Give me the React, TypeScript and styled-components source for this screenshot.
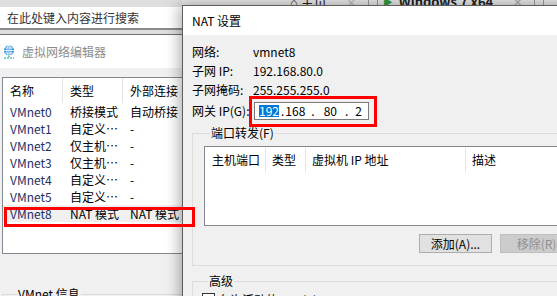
import React from "react";
import styled, { createGlobalStyle } from "styled-components";

const GlobalStyle = createGlobalStyle`
  *, *::before, *::after { box-sizing: border-box; }
  html, body { margin: 0; padding: 0; }
  body {
    font-family: "Noto Sans CJK SC", "Noto Sans", sans-serif;
    font-size: 12px;
    color: #000;
    background: #e5e5e5;
  }
`;

const networks = [
  { name: "VMnet0", type: "桥接模式", ext: "自动桥接" },
  { name: "VMnet1", type: "自定义…", ext: "-" },
  { name: "VMnet2", type: "仅主机…", ext: "-" },
  { name: "VMnet3", type: "仅主机…", ext: "-" },
  { name: "VMnet4", type: "自定义…", ext: "-" },
  { name: "VMnet5", type: "自定义…", ext: "-" },
  { name: "VMnet8", type: "NAT 模式", ext: "NAT 模式", selected: true },
];

const ipParts = [
  { text: "192", gap: 4, selected: true },
  { text: ".", gap: 2 },
  { text: "168", gap: 1 },
  { text: ".", gap: 6 },
  { text: "80", gap: 9 },
  { text: ".", gap: 8 },
  { text: "2", gap: 7 },
];

export default function App() {
  return (
    <>
      <GlobalStyle />
      <Desktop>
        <LeftColumn>
          <SearchBox>在此处键入内容进行搜索</SearchBox>
          <EditorWindow>
            <WindowTitle $inactive>
              <GlobeIcon />
              <span>虚拟网络编辑器</span>
            </WindowTitle>
            <EditorBody>
              <NetList>
                <NetRow $header>
                  <NetCell $sep>名称</NetCell>
                  <NetCell $sep>类型</NetCell>
                  <NetCell>外部连接</NetCell>
                </NetRow>
                {networks.map((n) => (
                  <NetRow key={n.name} $selected={n.selected}>
                    <NetCell $name>{n.name}</NetCell>
                    <NetCell>{n.type}</NetCell>
                    <NetCell>{n.ext}</NetCell>
                  </NetRow>
                ))}
              </NetList>
              <GroupBox $top={33} $pad="4px 8px">
                <GroupLegend>VMnet 信息</GroupLegend>
              </GroupBox>
            </EditorBody>
          </EditorWindow>
        </LeftColumn>

        <RightColumn>
          <TabStrip>
            <Tab>
              <span>⌂ 主页</span>
              <TabClose>×</TabClose>
            </Tab>
            <TabDivider />
            <Tab $active>
              <VmMark>▶</VmMark>
              <span>Windows 7 x64</span>
              <TabClose>×</TabClose>
            </Tab>
            <TabDivider />
          </TabStrip>

          <Dialog>
            <DialogTitle>NAT 设置</DialogTitle>
            <DialogBody>
              <InfoRow>
                <span>网络:</span>
                <span>vmnet8</span>
              </InfoRow>
              <InfoRow>
                <span>子网 IP:</span>
                <span>192.168.80.0</span>
              </InfoRow>
              <InfoRow>
                <span>子网掩码:</span>
                <span>255.255.255.0</span>
              </InfoRow>
              <InfoRow $tall>
                <span>网关 IP(G):</span>
                <IpInput>
                  {ipParts.map((p, i) => (
                    <IpPart key={i} $gap={p.gap} $selected={p.selected}>
                      {p.text}
                    </IpPart>
                  ))}
                </IpInput>
              </InfoRow>

              <GroupBox $top={3} $pad="6px 11px 12px 11px">
                <GroupLegend>端口转发(F)</GroupLegend>
                <PortList>
                  <PortHeader>
                    <PortCell>主机端口</PortCell>
                    <PortCell>类型</PortCell>
                    <PortCell>虚拟机 IP 地址</PortCell>
                    <PortCell>描述</PortCell>
                  </PortHeader>
                </PortList>
                <ButtonRow>
                  <Button>添加(A)...</Button>
                  <Button disabled>移除(R)</Button>
                </ButtonRow>
              </GroupBox>

              <GroupBox $top={8} $pad="5px 9px">
                <GroupLegend>高级</GroupLegend>
                <CheckRow>
                  <CheckBox />
                  <span>允许活动的 FTP(T)</span>
                </CheckRow>
              </GroupBox>
            </DialogBody>
          </Dialog>
        </RightColumn>

        <Annotation $x={4} $y={207} $w={191} $h={20} />
        <Annotation $x={249} $y={96} $w={128} $h={31} />
      </Desktop>
    </>
  );
}

function GlobeIcon() {
  return (
    <svg width="12" height="14" viewBox="0 0 12 14">
      <circle cx="6" cy="5.5" r="5" fill="#1b86e0" />
      <ellipse cx="6" cy="5.5" rx="2.1" ry="5" fill="none" stroke="#fff" strokeWidth="0.9" />
      <path d="M1 5.5h10M6 0.5v10M2 3h8M2 8h8" stroke="#fff" strokeWidth="0.8" fill="none" />
      <path d="M6 10.5v1.5M1 13h10" stroke="#17a08c" strokeWidth="1.2" strokeDasharray="2 1" />
    </svg>
  );
}

const Desktop = styled.div`
  position: relative;
  width: 557px;
  height: 296px;
  overflow: hidden;
  display: grid;
  grid-template-columns: 182px minmax(0, 1fr);
  background: #e5e5e5;
`;

const LeftColumn = styled.div`
  display: flex;
  flex-direction: column;
  min-width: 0;
  overflow: hidden;
  padding-top: 7px;
  background: #dedede;
`;

const SearchBox = styled.div`
  height: 23px;
  flex-shrink: 0;
  background: #fff;
  border-bottom: 2px solid #8a8a8a;
  padding-left: 7px;
  display: flex;
  align-items: center;
  color: #333;
  line-height: 14px;
  white-space: nowrap;
`;

const EditorWindow = styled.div`
  margin-top: 4px;
  flex: 1;
  display: flex;
  flex-direction: column;
  border-top: 1px solid #707070;
  background: #f0f0f0;
`;

const WindowTitle = styled.div<{ $inactive?: boolean }>`
  height: 33px;
  flex-shrink: 0;
  background: #fff;
  display: flex;
  align-items: center;
  gap: 7px;
  padding-left: 3px;
  color: ${(p) => (p.$inactive ? "#8c8c8c" : "#000")};
  line-height: 14px;
  white-space: nowrap;
`;

const EditorBody = styled.div`
  padding: 9px 0 0 2px;
`;

const NetList = styled.div`
  height: 177px;
  background: #fff;
  border: 1px solid #828790;
  border-right: none;
`;

const NetRow = styled.div<{ $header?: boolean; $selected?: boolean }>`
  display: grid;
  grid-template-columns: 60px 60px 1fr;
  height: ${(p) => (p.$header ? 25 : 17)}px;
  align-items: center;
  background: ${(p) => (p.$selected ? "#f0f0f0" : "transparent")};
  white-space: nowrap;
`;

const NetCell = styled.div<{ $sep?: boolean; $name?: boolean }>`
  padding-left: 7px;
  line-height: 17px;
  height: 100%;
  display: flex;
  align-items: center;
  color: ${(p) => (p.$name ? "#262f66" : "#000")};
  border-right: ${(p) => (p.$sep ? "1px solid #e5e5e5" : "none")};
  overflow: hidden;
`;

const GroupBox = styled.fieldset<{ $top: number; $pad: string }>`
  margin: ${(p) => p.$top}px 0 0 0;
  padding: ${(p) => p.$pad};
  border: 1px solid #dcdcdc;
  min-width: 0;
`;

const GroupLegend = styled.legend`
  margin-left: 6px;
  padding: 0 1px;
  line-height: 14px;
  font-size: 12px;
  white-space: nowrap;
`;

const RightColumn = styled.div`
  display: flex;
  flex-direction: column;
  min-width: 0;
`;

const TabStrip = styled.div`
  height: 5px;
  flex-shrink: 0;
  overflow: hidden;
  display: flex;
  align-items: flex-end;
  padding-left: 108px;
  background: #e8e8e8;
`;

const Tab = styled.div<{ $active?: boolean }>`
  display: flex;
  align-items: flex-end;
  gap: 6px;
  padding: 0 10px 0 0;
  margin-bottom: -4px;
  line-height: 14px;
  font-size: 13px;
  font-weight: ${(p) => (p.$active ? 700 : 400)};
  white-space: nowrap;
  color: #222;
`;

const TabClose = styled.span`
  color: #b0b0b0;
  margin-left: 12px;
`;

const VmMark = styled.span`
  color: #2f9e3f;
  font-size: 10px;
`;

const TabDivider = styled.div`
  width: 10px;
  height: 14px;
  margin-right: 5px;
  border-left: 1px solid #9a9a9a;
  border-right: 1px solid #9a9a9a;
`;

const Dialog = styled.div`
  position: relative;
  z-index: 1;
  flex: 1;
  width: 412px;
  display: flex;
  flex-direction: column;
  background: #f0f0f0;
  border-top: 1px solid #5e5e5e;
  border-left: 1px solid #5e5e5e;
  box-shadow: -2px 0 14px rgba(0, 0, 0, 0.35);
`;

const DialogTitle = styled.div`
  height: 29px;
  flex-shrink: 0;
  background: #fff;
  padding-left: 9px;
  display: flex;
  align-items: center;
  line-height: 14px;
`;

const DialogBody = styled.div`
  padding: 7px 9px 0 9px;
`;

const InfoRow = styled.div<{ $tall?: boolean }>`
  display: grid;
  grid-template-columns: ${(p) => (p.$tall ? 62 : 61)}px auto;
  justify-content: start;
  height: ${(p) => (p.$tall ? 24 : 19)}px;
  align-items: center;
  line-height: 14px;
  white-space: nowrap;
`;

const IpInput = styled.div`
  width: 115px;
  height: 18px;
  background: #fff;
  border: 1px solid #7a7a7a;
  display: flex;
  align-items: center;
`;

const IpPart = styled.span<{ $gap: number; $selected?: boolean }>`
  margin-left: ${(p) => p.$gap}px;
  line-height: 12px;
  height: 12px;
  display: inline-block;
  background: ${(p) => (p.$selected ? "#0078d7" : "transparent")};
  color: ${(p) => (p.$selected ? "#fff" : "#000")};
`;

const PortList = styled.div`
  height: 80px;
  background: #fff;
  border: 1px solid #828790;
`;

const PortHeader = styled.div`
  display: grid;
  grid-template-columns: 61px 40px 160px 1fr;
  height: 26px;
  white-space: nowrap;
`;

const PortCell = styled.div`
  padding-left: 6px;
  margin: 1px 0;
  display: flex;
  align-items: center;
  line-height: 14px;
  border-right: 1px solid #e5e5e5;

  &:first-child {
    padding-left: 7px;
  }
  &:last-child {
    border-right: none;
  }
`;

const ButtonRow = styled.div`
  display: flex;
  justify-content: flex-end;
  gap: 8px;
  margin-top: 8px;
`;

const Button = styled.button`
  width: 73px;
  height: 19px;
  padding: 0;
  font-family: inherit;
  font-size: 12px;
  line-height: 14px;
  color: #000;
  background: #e1e1e1;
  border: 1px solid #adadad;
  border-radius: 0;

  &:disabled {
    color: #8f8f8f;
    background: #cccccc;
    border-color: #bfbfbf;
  }
`;

const CheckRow = styled.div`
  display: flex;
  align-items: flex-start;
  gap: 3px;
  line-height: 14px;
  white-space: nowrap;
`;

const CheckBox = styled.span`
  width: 13px;
  height: 13px;
  flex-shrink: 0;
  background: #fff;
  border: 1px solid #333;
`;

const Annotation = styled.div<{ $x: number; $y: number; $w: number; $h: number }>`
  position: absolute;
  left: ${(p) => p.$x}px;
  top: ${(p) => p.$y}px;
  width: ${(p) => p.$w}px;
  height: ${(p) => p.$h}px;
  border: 3px solid #ff0000;
  z-index: 5;
  pointer-events: none;
`;
